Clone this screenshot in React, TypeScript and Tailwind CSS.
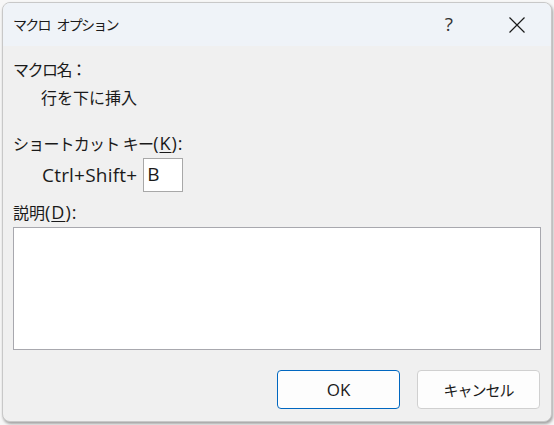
import React from "react";

const font = { fontFamily: '"Open Sans", "Noto Sans CJK JP", sans-serif' };

const App: React.FC = () => {
  return (
    <div className="w-[554px] h-[425px] bg-[#f7f7f7] pl-[2px] pt-[2px]" style={font}>
      <div className="w-[550px] h-[420px] flex flex-col rounded-lg overflow-hidden border border-[#c8c8c8] bg-[#f0f0f0] shadow-[1px_2px_3px_rgba(0,0,0,0.35)] text-[#1a1a1a]">
        {/* タイトルバー */}
        <div className="h-[43px] shrink-0 flex items-center bg-[#eff3f8] pl-[10px] pr-[26px]">
          <span className="text-[14px] leading-none tracking-[-1.8px]">マクロ</span>
          <span className="ml-[7px] text-[14px] leading-none tracking-[-1.8px]">オプション</span>
          <span className="ml-auto mr-[56px] text-[19px] leading-none text-[#333]">?</span>
          <svg width="16" height="16" viewBox="0 0 16 16">
            <path d="M0.5 0.5L15.5 15.5M15.5 0.5L0.5 15.5" stroke="#1a1a1a" strokeWidth="1.2" />
          </svg>
        </div>

        {/* 本体 */}
        <div className="flex-1 flex flex-col pl-[10px] pr-[10px] text-[16px] leading-[20px]">
          <div className="mt-[14px] tracking-[-1.5px]">マクロ名：</div>
          <div className="mt-[8px] pl-[28px]">行を下に挿入</div>
          <div className="mt-[25px] h-[20px] flex items-baseline">
            <span className="tracking-[-0.8px]">ショートカット キー</span>
            <span className="text-[18px] leading-[20px] tracking-[1px]">
              (<span className="underline underline-offset-2">K</span>):
            </span>
          </div>
          <div className="mt-[5px] pl-[29px] flex items-center">
            <span className="text-[19px] tracking-[0.2px]">Ctrl+Shift+</span>
            <div className="ml-[6px] w-[40px] h-[34px] bg-white border border-[#a8a8a8] pl-[3px] pt-[4px] text-[19px] leading-[22px]">
              B
            </div>
          </div>
          <div className="mt-[10px] h-[20px] flex items-baseline">
            <span>説明</span>
            <span className="text-[18px] leading-[20px] tracking-[1px]">
              (<span className="underline underline-offset-2">D</span>):
            </span>
          </div>
          <div className="mt-[5px] h-[123px] bg-white border border-[#a8a8ae]" />
          <div className="mt-[20px] flex justify-end gap-[17px] pr-[1px]">
            <button className="w-[123px] h-[39px] rounded-[4px] border border-[#0067c0] bg-[#fdfdfd] text-[17px]">
              OK
            </button>
            <button className="w-[123px] h-[39px] rounded-[4px] border border-[#d0d0d0] bg-[#fdfdfd] text-[15px] tracking-[-1px]">
              キャンセル
            </button>
          </div>
        </div>
      </div>
    </div>
  );
};

export default App;
